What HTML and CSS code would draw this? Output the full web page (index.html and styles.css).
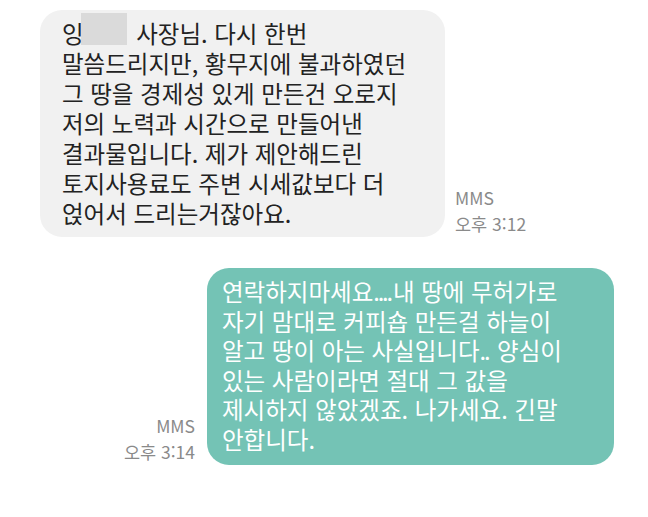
FILE: index.html
```html
<!DOCTYPE html>
<html lang="ko">
<head>
<meta charset="utf-8">
<link rel="stylesheet" href="styles.css">
</head>
<body>
<div class="thread">
  <div class="row incoming">
    <div class="bubble in">잉<span class="blur"></span> 사장님. 다시 한번<br>말씀드리지만, 황무지에 불과하였던<br>그 땅을 경제성 있게 만든건 오로지<br>저의 노력과 시간으로 만들어낸<br>결과물입니다. 제가 제안해드린<br>토지사용료도 주변 시세값보다 더<br>얹어서 드리는거잖아요.</div>
    <div class="meta left"><div>MMS</div><div>오후 3:12</div></div>
  </div>
  <div class="row outgoing">
    <div class="meta right"><div>MMS</div><div>오후 3:14</div></div>
    <div class="bubble out">연락하지마세요<span class="dots">....</span>내 땅에 무허가로<br>자기 맘대로 커피숍 만든걸 하늘이<br>알고 땅이 아는 사실입니다<span class="dots">..</span> 양심이<br>있는 사람이라면 절대 그 값을<br>제시하지 않았겠죠<span class="p">.</span> 나가세요<span class="p">.</span> 긴말<br>안합니다.</div>
  </div>
</div>
</body>
</html>
```
FILE: styles.css
```css
html, body {
  margin: 0;
  padding: 0;
  background: #ffffff;
}
body {
  width: 648px;
  height: 517px;
  overflow: hidden;
  font-family: "Noto Sans CJK KR", "Noto Sans", sans-serif;
}
.thread {
  display: flex;
  flex-direction: column;
  padding-top: 10px;
}
.row {
  display: flex;
  align-items: flex-end;
}
.incoming {
  padding-left: 40px;
  gap: 10px;
}
.outgoing {
  justify-content: flex-end;
  padding-right: 34px;
  margin-top: 31px;
  gap: 12px;
}
.bubble {
  box-sizing: border-box;
  font-size: 23.5px;
  line-height: 30px;
  border-radius: 22px;
  white-space: nowrap;
}
.in {
  width: 405px;
  height: 227px;
  background: #f1f1f1;
  color: #222222;
  padding: 8px 10px 0 22px;
}
.out {
  width: 407px;
  height: 197px;
  background: #74c3b5;
  color: #ffffff;
  padding: 9px 10px 0 15px;
  line-height: 29.5px;
}
.dots {
  letter-spacing: -2.2px;
  margin-right: 2.2px;
}
.p {
  letter-spacing: -3.5px;
  margin-right: 3.5px;
}
.blur {
  display: inline-block;
  width: 46px;
  height: 32px;
  background: #dadada;
  vertical-align: -2px;
  margin: -10px 3px 0 -3px;
}
.meta {
  font-size: 17.5px;
  line-height: 26px;
  color: #8a8a8a;
}
.meta.right {
  text-align: right;
}
```
